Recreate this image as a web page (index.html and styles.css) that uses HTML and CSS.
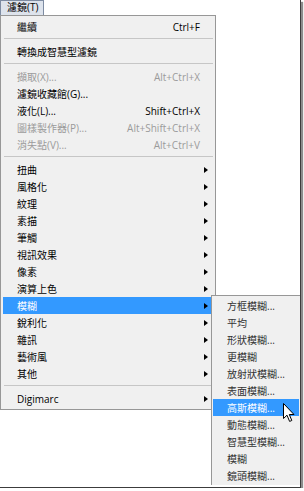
FILE: index.html
```html
<!DOCTYPE html>
<html lang="zh-Hant">
<head>
    <meta charset="UTF-8">
    <title>濾鏡選單</title>
    <link rel="stylesheet" href="styles.css">
</head>
<body>

<div class="shot">
    <div class="tab">濾鏡(T)</div>

    <div class="menu main">
        <div class="item"><span class="label">繼續</span><span class="key">Ctrl+F</span></div>
        <div class="sep"></div>
        <div class="item"><span class="label">轉換成智慧型濾鏡</span></div>
        <div class="sep"></div>
        <div class="item off"><span class="label">擷取(X)...</span><span class="key">Alt+Ctrl+X</span></div>
        <div class="item"><span class="label">濾鏡收藏館(G)...</span></div>
        <div class="item"><span class="label">液化(L)...</span><span class="key">Shift+Ctrl+X</span></div>
        <div class="item off"><span class="label">圖樣製作器(P)...</span><span class="key">Alt+Shift+Ctrl+X</span></div>
        <div class="item off"><span class="label">消失點(V)...</span><span class="key">Alt+Ctrl+V</span></div>
        <div class="sep"></div>
        <div class="item"><span class="label">扭曲</span><span class="arrow"></span></div>
        <div class="item"><span class="label">風格化</span><span class="arrow"></span></div>
        <div class="item"><span class="label">紋理</span><span class="arrow"></span></div>
        <div class="item"><span class="label">素描</span><span class="arrow"></span></div>
        <div class="item"><span class="label">筆觸</span><span class="arrow"></span></div>
        <div class="item"><span class="label">視訊效果</span><span class="arrow"></span></div>
        <div class="item"><span class="label">像素</span><span class="arrow"></span></div>
        <div class="item"><span class="label">演算上色</span><span class="arrow"></span></div>
        <div class="item active"><span class="label">模糊</span><span class="arrow"></span></div>
        <div class="item"><span class="label">銳利化</span><span class="arrow"></span></div>
        <div class="item"><span class="label">雜訊</span><span class="arrow"></span></div>
        <div class="item"><span class="label">藝術風</span><span class="arrow"></span></div>
        <div class="item"><span class="label">其他</span><span class="arrow"></span></div>
        <div class="sep"></div>
        <div class="item"><span class="label">Digimarc</span><span class="arrow"></span></div>
    </div>

    <!-- blur submenu, opened from 模糊 -->
    <div class="menu sub">
        <div class="item">方框模糊...</div>
        <div class="item">平均</div>
        <div class="item">形狀模糊...</div>
        <div class="item">更模糊</div>
        <div class="item">放射狀模糊...</div>
        <div class="item">表面模糊...</div>
        <div class="item active">高斯模糊...</div>
        <div class="item">動態模糊...</div>
        <div class="item">智慧型模糊...</div>
        <div class="item">模糊</div>
        <div class="item">鏡頭模糊...</div>
    </div>

    <svg class="cursor" width="13" height="20" viewBox="0 0 13 20">
        <path d="M0.5 0.5 L0.5 15.5 L4 12.2 L6.6 18.4 L8.8 17.5 L6.3 11.5 L11 11.5 Z" fill="#fff" stroke="#000" stroke-width="1" stroke-linejoin="round"/>
    </svg>
</div>

</body>
</html>
```

FILE: styles.css
```css
body {
    margin: 0;
    background-color: #fff;
    font-family: "Open Sans", "Noto Sans CJK TC", sans-serif;
    font-size: 10px;
    color: #000;
}

.shot {
    position: relative;
    width: 300px;
    height: 487px;
    background-color: #fff;
    border-right: 1px solid #3c3c3c;
    border-bottom: 1px solid #3c3c3c;
    box-shadow: 2px 2px 1px rgba(0, 0, 0, 0.45);
}

.tab {
    box-sizing: border-box;
    width: 44px;
    height: 15px;
    padding-left: 6px;
    line-height: 13px;
    background-color: #dde3ec;
    border: 1px solid #7d8ba2;
    border-bottom: none;
}

.menu {
    box-sizing: border-box;
    background-color: #f0f0f0;
    border: 1px solid #979797;
}

.main {
    width: 216px;
    padding: 2px;
}

.item {
    display: flex;
    align-items: center;
    height: 17px;
    padding: 0 13px 0 14px;
    white-space: nowrap;
}

.item .label {
    flex: 1;
}

.item.off {
    color: #9b9b9b;
}

.item.active {
    background-color: #3399ff;
    color: #fff;
}

.arrow {
    width: 0;
    height: 0;
    margin-right: -8px;
    border-left: 4px solid #000;
    border-top: 3.5px solid transparent;
    border-bottom: 3.5px solid transparent;
}

.sep {
    margin: 3px 0 4px 1px;
    border-top: 1px solid #c6c6c6;
}

.sub {
    position: absolute;
    left: 211px;
    top: 295px;
    width: 89px;
    padding: 1px 1px;
    border-right: none;
    border-bottom: none;
}

.sub .item {
    padding: 0 4px 0 14px;
    color: #333;
}

.sub .item.active {
    color: #fff;
}

.cursor {
    position: absolute;
    left: 283px;
    top: 403px;
}
```
